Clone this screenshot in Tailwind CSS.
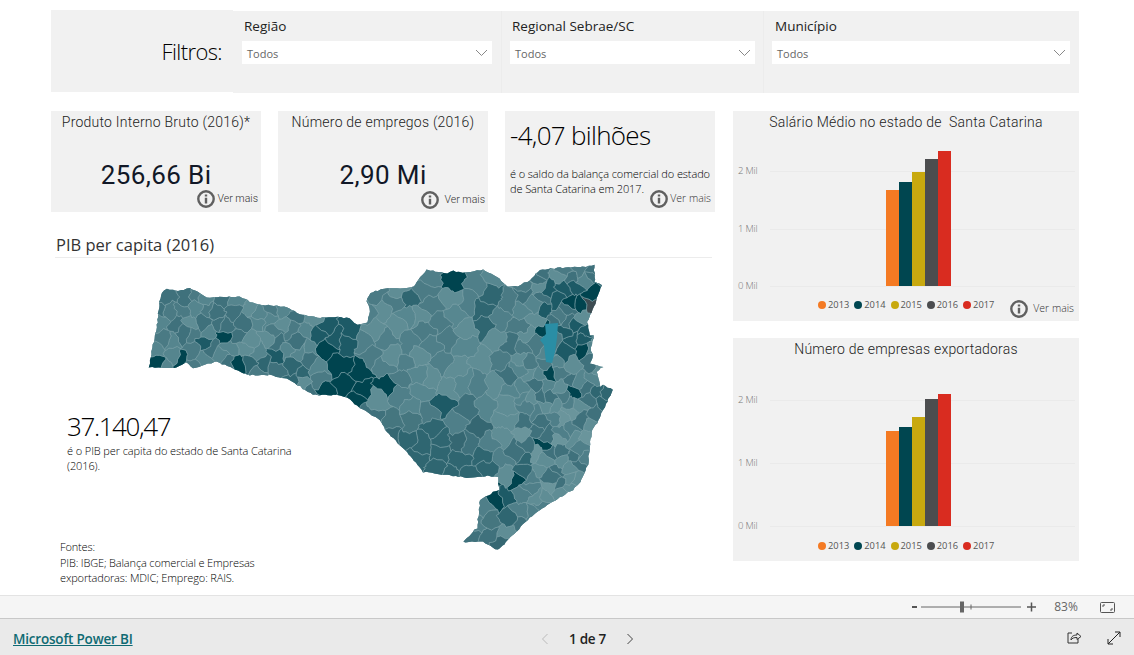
<!DOCTYPE html>
<html lang="pt-BR">
<head>
  <meta charset="UTF-8" />
  <meta name="viewport" content="width=device-width, initial-scale=1.0" />
  <title>Microsoft Power BI</title>
  <script src="https://cdn.jsdelivr.net/npm/@tailwindcss/browser@4"></script>
</head>
<body class="bg-white h-screen overflow-hidden flex flex-col font-['Open_Sans',sans-serif]">

  <!-- Relatorio -->
  <div class="relative flex-1 pl-[51px] pr-[55px] pt-[10px] border-b border-[#e3e3e3]">

    <!-- Filtros -->
    <div class="flex h-[83px]">
      <div class="w-[182px] h-[82px] bg-[#f1f1f1] flex items-center justify-end pr-[11px] text-[22px] font-light tracking-[-0.6px] text-black">Filtros:</div>
      <div class="w-[269px] mt-px bg-[#f1f1f1] border-r border-[#ececec] pl-[9px] pr-[9px] pt-[5px]">
        <p class="pl-[2px] h-[25px] text-[13.5px] leading-[20px] text-[#222]">Região</p>
        <div class="h-[23px] bg-white flex items-center justify-between pl-[5px] pr-[4px] pt-[3px] text-[11px] text-[#666]">
          <span>Todos</span>
          <svg width="13" height="8" viewBox="0 0 13 8" fill="none" stroke="#888" stroke-width="1" class="mb-[2px]"><path d="M1 1l5.500 5.500L12 1" /></svg>
        </div>
      </div>
      <div class="w-[262px] mt-px bg-[#f1f1f1] border-r border-[#ececec] pl-[8px] pr-[8px] pt-[5px]">
        <p class="pl-[2px] h-[25px] text-[13.5px] leading-[20px] text-[#222]">Regional Sebrae/SC</p>
        <div class="h-[23px] bg-white flex items-center justify-between pl-[5px] pr-[4px] pt-[3px] text-[11px] text-[#666]">
          <span>Todos</span>
          <svg width="13" height="8" viewBox="0 0 13 8" fill="none" stroke="#888" stroke-width="1" class="mb-[2px]"><path d="M1 1l5.500 5.500L12 1" /></svg>
        </div>
      </div>
      <div class="w-[315px] mt-px bg-[#f1f1f1] pl-[8px] pr-[9px] pt-[5px]">
        <p class="pl-[3px] h-[25px] text-[13.5px] leading-[20px] text-[#222]">Município</p>
        <div class="h-[23px] bg-white flex items-center justify-between pl-[5px] pr-[4px] pt-[3px] text-[11px] text-[#666]">
          <span>Todos</span>
          <svg width="13" height="8" viewBox="0 0 13 8" fill="none" stroke="#888" stroke-width="1" class="mb-[2px]"><path d="M1 1l5.500 5.500L12 1" /></svg>
        </div>
      </div>
    </div>

    <div class="flex gap-[18px] mt-[18px]">
      <!-- Coluna esquerda -->
      <div class="w-[664px]">
        <div class="flex gap-[17px]">
          <div class="relative w-[210px] h-[101px] bg-[#f1f1f1] text-center font-['Roboto',sans-serif]">
            <p class="pt-[2px] text-[14px] leading-[18px] font-light tracking-[0.23px] text-[#222]">Produto Interno Bruto (2016)*</p>
            <p class="mt-[27px] text-[26px] leading-[34px] tracking-[0.4px] text-[#111827]">256,66 Bi</p>
            <div class="absolute right-[3px] top-[79px] flex items-center gap-[3px]">
              <svg width="18" height="18" viewBox="0 0 18 18"><circle cx="9" cy="9" r="7.700" fill="none" stroke="#606060" stroke-width="2.400" /><path d="M9 4.500v2M9 7.800v5.700" stroke="#606060" stroke-width="2.400" /></svg>
              <span class="text-[10.5px] font-light text-[#333]">Ver mais</span>
            </div>
          </div>
          <div class="relative w-[210px] h-[101px] bg-[#f1f1f1] text-center font-['Roboto',sans-serif]">
            <p class="pt-[2px] text-[14px] leading-[18px] font-light tracking-[0.23px] text-[#222]">Número de empregos (2016)</p>
            <p class="mt-[27px] text-[26px] leading-[34px] tracking-[0.4px] text-[#111827]">2,90 Mi</p>
            <div class="absolute right-[3px] top-[80px] flex items-center gap-[6px]">
              <svg width="18" height="18" viewBox="0 0 18 18"><circle cx="9" cy="9" r="7.700" fill="none" stroke="#606060" stroke-width="2.400" /><path d="M9 4.500v2M9 7.800v5.700" stroke="#606060" stroke-width="2.400" /></svg>
              <span class="text-[10.5px] font-light text-[#333]">Ver mais</span>
            </div>
          </div>
          <div class="relative w-[210px] h-[101px] bg-[#f1f1f1] pl-[5px]">
            <p class="pt-[6px] text-[26px] leading-[36px] font-light tracking-[-0.7px] text-black">-4,07 bilhões</p>
            <p class="mt-[13px] text-[11px] leading-[15px] font-light tracking-[-0.1px] text-black">é o saldo da balança comercial do estado<br />de Santa Catarina em 2017.</p>
            <div class="absolute right-[4px] top-[79px] flex items-center gap-[2px]">
              <svg width="18" height="18" viewBox="0 0 18 18"><circle cx="9" cy="9" r="7.700" fill="none" stroke="#606060" stroke-width="2.400" /><path d="M9 4.500v2M9 7.800v5.700" stroke="#606060" stroke-width="2.400" /></svg>
              <span class="text-[10.5px] font-light text-[#333]">Ver mais</span>
            </div>
          </div>
        </div>

        <!-- PIB per capita -->
        <div class="relative h-[383px]">
          <svg id="mapa" class="absolute left-[-51px] top-[-212px]" width="1134" height="595" viewBox="0 0 1134 595"></svg>
          <div class="relative ml-[4px] mr-[3px] pl-px pt-[22px] h-[46px] border-b border-[#ececec] text-[16.5px] leading-[22px] text-[#333]">PIB per capita (2016)</div>
          <div class="relative pl-[16px] pt-[150px]">
            <p class="text-[26px] leading-[36px] font-light tracking-[-1.4px] text-black">37.140,47</p>
            <p class="w-[240px] mt-[-1px] text-[11px] leading-[15px] font-light tracking-[-0.1px] text-black">é o PIB per capita do estado de Santa Catarina (2016).</p>
          </div>
          <p class="relative pl-[9px] pt-[66px] w-[225px] text-[11px] leading-[15.5px] font-light tracking-[-0.15px] text-black">Fontes:<br />PIB: IBGE; Balança comercial e Empresas exportadoras: MDIC; Emprego: RAIS.</p>
        </div>
      </div>

      <!-- Coluna direita -->
      <div class="w-[346px] flex flex-col gap-[17px]">
        <div class="relative h-[210px] bg-[#f1f1f1]">
          <p class="pt-[2px] text-center font-['Roboto',sans-serif] text-[14px] leading-[18px] font-light tracking-[0.23px] text-[#222]">Salário Médio no estado de&nbsp; Santa Catarina</p>
          <div class="absolute left-[5px] top-[60px] w-[337px] h-[116px] flex flex-col justify-between">
            <div class="flex items-center h-px gap-[8px]"><span class="w-[24px] text-[9.500px] tracking-[-0.2px] font-light text-[#777]">2 Mil</span><span class="flex-1 h-px bg-[#eaeaea]"></span></div>
            <div class="flex items-center h-px gap-[8px]"><span class="w-[24px] text-[9.500px] tracking-[-0.2px] font-light text-[#777]">1 Mil</span><span class="flex-1 h-px bg-[#eaeaea]"></span></div>
            <div class="flex items-center h-px gap-[8px]"><span class="w-[24px] text-[9.500px] tracking-[-0.2px] font-light text-[#777]">0 Mil</span><span class="flex-1 h-px bg-[#eaeaea]"></span></div>
          </div>
          <div class="absolute left-[153px] top-[40px] h-[135px] flex items-end">
            <div class="w-[13px] h-[96px] bg-[#f47a23]"></div>
            <div class="w-[13px] h-[104px] bg-[#004650]"></div>
            <div class="w-[13px] h-[114px] bg-[#c8a90f]"></div>
            <div class="w-[13px] h-[127px] bg-[#4c4d4f]"></div>
            <div class="w-[13px] h-[135px] bg-[#d92c20]"></div>
          </div>
          <div class="absolute left-[85px] top-[187px] flex items-center gap-[5px] text-[9.300px] leading-[14px] text-[#555]">
            <span class="flex items-center gap-[2px]"><i class="size-[8px] rounded-full bg-[#f47a23]"></i>2013</span>
            <span class="flex items-center gap-[2px]"><i class="size-[8px] rounded-full bg-[#004650]"></i>2014</span>
            <span class="flex items-center gap-[2px]"><i class="size-[8px] rounded-full bg-[#c8a90f]"></i>2015</span>
            <span class="flex items-center gap-[2px]"><i class="size-[8px] rounded-full bg-[#4c4d4f]"></i>2016</span>
            <span class="flex items-center gap-[2px]"><i class="size-[8px] rounded-full bg-[#d92c20]"></i>2017</span>
          </div>
          <div class="absolute right-[5px] top-[189px] flex items-center gap-[5px]">
            <svg width="18" height="18" viewBox="0 0 18 18"><circle cx="9" cy="9" r="7.700" fill="none" stroke="#606060" stroke-width="2.400" /><path d="M9 4.500v2M9 7.800v5.700" stroke="#606060" stroke-width="2.400" /></svg>
            <span class="text-[10.5px] font-light text-[#333]">Ver mais</span>
          </div>
        </div>

        <div class="relative h-[223px] bg-[#f1f1f1]">
          <p class="pt-[2px] text-center font-['Roboto',sans-serif] text-[14px] leading-[18px] font-light tracking-[0.2px] text-[#222]">Número de empresas exportadoras</p>
          <div class="absolute left-[5px] top-[62px] w-[337px] h-[127px] flex flex-col justify-between">
            <div class="flex items-center h-px gap-[8px]"><span class="w-[24px] text-[9.500px] tracking-[-0.2px] font-light text-[#777]">2 Mil</span><span class="flex-1 h-px bg-[#eaeaea]"></span></div>
            <div class="flex items-center h-px gap-[8px]"><span class="w-[24px] text-[9.500px] tracking-[-0.2px] font-light text-[#777]">1 Mil</span><span class="flex-1 h-px bg-[#eaeaea]"></span></div>
            <div class="flex items-center h-px gap-[8px]"><span class="w-[24px] text-[9.500px] tracking-[-0.2px] font-light text-[#777]">0 Mil</span><span class="flex-1 h-px bg-[#eaeaea]"></span></div>
          </div>
          <div class="absolute left-[153px] top-[56px] h-[132px] flex items-end">
            <div class="w-[13px] h-[95px] bg-[#f47a23]"></div>
            <div class="w-[13px] h-[99px] bg-[#004650]"></div>
            <div class="w-[13px] h-[109px] bg-[#c8a90f]"></div>
            <div class="w-[13px] h-[127px] bg-[#4c4d4f]"></div>
            <div class="w-[13px] h-[132px] bg-[#d92c20]"></div>
          </div>
          <div class="absolute left-[85px] top-[201px] flex items-center gap-[5px] text-[9.300px] leading-[14px] text-[#555]">
            <span class="flex items-center gap-[2px]"><i class="size-[8px] rounded-full bg-[#f47a23]"></i>2013</span>
            <span class="flex items-center gap-[2px]"><i class="size-[8px] rounded-full bg-[#004650]"></i>2014</span>
            <span class="flex items-center gap-[2px]"><i class="size-[8px] rounded-full bg-[#c8a90f]"></i>2015</span>
            <span class="flex items-center gap-[2px]"><i class="size-[8px] rounded-full bg-[#4c4d4f]"></i>2016</span>
            <span class="flex items-center gap-[2px]"><i class="size-[8px] rounded-full bg-[#d92c20]"></i>2017</span>
          </div>
        </div>
      </div>
    </div>
  </div>

  <!-- Barra de zoom -->
  <div class="h-[23px] shrink-0 bg-[#f5f5f5] border-b border-[#c8c8c8] flex items-center justify-end pr-[19px] text-[#666]">
    <svg width="125" height="14" viewBox="0 0 125 14" class="mr-[9px]">
      <path d="M0 7h5" stroke="#555" stroke-width="2" />
      <path d="M9 7h100M59 4.500v5" stroke="#666" stroke-width="1" />
      <rect x="48" y="1.500" width="4" height="11" fill="#666" />
      <path d="M115 7h9M119.500 2.500v9" stroke="#555" stroke-width="1.500" />
    </svg>
    <span class="w-[40px] text-center text-[12px]">83%</span>
    <svg width="15" height="11" viewBox="0 0 15 11" class="ml-[14px]" fill="none" stroke="#555"><rect x="0.500" y="0.500" width="14" height="10" rx="1" /><path d="M3 5V3h2M12 6v2h-2" /></svg>
  </div>

  <!-- Rodape -->
  <div class="h-[36px] shrink-0 bg-[#eaeaea] flex items-center pl-[13px] pr-[13px] pt-[4px]">
    <a class="w-[370px] text-[13.5px] font-semibold underline tracking-[-0.2px] text-[#0f6a73]">Microsoft Power BI</a>
    <div class="flex items-center ml-[157px]">
      <svg width="10" height="12" viewBox="0 0 10 12" fill="none" stroke="#bbb"><path d="M7.500 1l-5 5 5 5" /></svg>
      <span class="ml-[19px] text-[13.5px] font-semibold tracking-[-0.3px] text-[#222]">1 de 7</span>
      <svg width="10" height="12" viewBox="0 0 10 12" fill="none" stroke="#444" class="ml-[19px]"><path d="M2.500 1l5 5-5 5" /></svg>
    </div>
    <svg width="15" height="13" viewBox="0 0 15 13" fill="none" stroke="#333" class="ml-auto mb-[3px]"><path d="M5 2H1v10h10V8" /><path d="M4 9c0-4 3-5 6-5V2l4 3.500L10 8.500V6.500C7 6.500 5 7 4 9z" /></svg>
    <svg width="14" height="14" viewBox="0 0 14 14" fill="none" stroke="#222" class="ml-[25px] mb-[3px]"><path d="M1 13L13 1M8 1h5v5M1 8v5h5" /></svg>
  </div>

  <!-- Mapa dos municipios: celulas de Voronoi recortadas pelo contorno do estado -->
  <script>
    const contorno = [[149,367],[153,345],[157,325],[159,305],[162,293],[167,289],[178,291],[190,288],[198,292],[207,298],[220,297],[240,297],[253,303],[265,305],[287,307],[303,315],[320,318],[332,317],[350,318],[357,325],[367,323],[370,308],[366,302],[370,293],[387,288],[400,288],[413,287],[420,277],[427,270],[447,273],[453,271],[462,273],[483,270],[497,277],[508,287],[518,286],[530,280],[540,270],[557,268],[583,267],[594,265],[595,282],[602,285],[597,298],[592,312],[587,322],[590,335],[594,335],[591,348],[593,358],[590,363],[603,367],[597,372],[600,387],[603,385],[613,390],[603,410],[597,423],[593,428],[590,442],[588,465],[580,482],[573,490],[550,503],[530,518],[510,538],[498,550],[483,542],[472,542],[463,542],[477,528],[480,500],[493,492],[499,490],[498,477],[488,476],[470,478],[447,475],[423,472],[407,452],[400,445],[387,432],[380,420],[360,408],[347,398],[337,395],[313,395],[290,380],[270,375],[247,375],[233,368],[217,362],[193,368],[187,362],[177,368],[165,368]];

    // gerador com semente, para o desenho sair sempre igual
    let semente = 1234;
    function rnd() {
      semente = (semente * 1664525 + 1013904223) % 4294967296;
      return semente / 4294967296;
    }

    function dentro(x, y) {
      let d = false;
      for (let i = 0, j = contorno.length - 1; i < contorno.length; j = i++) {
        const [xi, yi] = contorno[i], [xj, yj] = contorno[j];
        if ((yi > y) !== (yj > y) && x < (xj - xi) * (y - yi) / (yj - yi) + xi) d = !d;
      }
      return d;
    }

    function distancia(x, y) {
      if (x > 520) return 9;
      if (x < 320) return 10;
      if (y > 430) return 13;
      return 14;
    }

    function corBase(x, y) {
      let cores = ['#4a7a84', '#55858e', '#3f717c', '#5f8d95'];
      if (x > 500 && y > 400) cores = ['#6a959c', '#5f8d95', '#4f7f89', '#3f717c'];
      else if (x > 320 && x < 500 && y < 400) cores = ['#4f7f89', '#578790', '#4b7b85', '#5f8d95'];
      else if (x > 380 && y > 420) cores = ['#3f717c', '#45767f', '#356772', '#4f7f89'];
      return cores[Math.floor(rnd() * cores.length)];
    }

    // municipios mais escuros: x, y, raio x, raio y, cor
    const escuro = '#00444f', medio = '#1d5a66', medio2 = '#2f6671', cinza = '#3d4c52';
    const destaques = [
      [335,337,17,19,medio],[157,362,8,7,escuro],[182,360,6,5,escuro],[203,342,7,6,medio],[222,337,6,5,escuro],
      [238,363,6,7,escuro],[251,364,12,11,medio2],[325,349,8,8,escuro],[340,365,7,7,escuro],[362,388,19,17,escuro],
      [385,385,14,11,escuro],[324,392,8,5,escuro],[276,355,7,5,medio],[303,373,16,10,medio2],[454,282,9,11,escuro],
      [410,299,10,12,medio2],[483,310,16,22,medio2],[443,404,15,11,medio],[422,443,22,18,medio2],[460,462,38,15,medio2],
      [562,288,18,13,medio],[591,291,11,11,escuro],[580,306,10,8,escuro],[546,310,11,12,medio],[545,329,5,9,escuro],
      [573,340,14,17,medio],[582,350,10,8,escuro],[549,371,9,6,escuro],[574,394,7,6,escuro],[603,403,10,18,medio2],
      [543,445,11,7,escuro],[518,480,5,5,escuro],[505,498,15,8,medio],[497,499,6,9,escuro],[527,461,13,11,medio2],
      [508,518,10,6,medio2],[589,305,4,7,cinza]
    ].sort((a, b) => a[2] * a[3] - b[2] * b[3]);

    function corCelula(x, y) {
      const d = destaques.find(d => ((x - d[0]) / d[2]) ** 2 + ((y - d[1]) / d[3]) ** 2 <= 1);
      return d ? d[4] : corBase(x, y);
    }

    const sementes = destaques.map(d => [d[0], d[1]]);
    for (let t = 0; t < 12000; t++) {
      const x = 145 + rnd() * 472, y = 262 + rnd() * 292;
      if (!dentro(x, y)) continue;
      const m = distancia(x, y);
      if (sementes.every(s => Math.hypot(s[0] - x, s[1] - y) > m)) sementes.push([x, y]);
    }

    function cortar(poli, a, b, c) {
      const saida = [];
      for (let i = 0; i < poli.length; i++) {
        const p = poli[i], q = poli[(i + 1) % poli.length];
        const fp = a * p[0] + b * p[1] - c, fq = a * q[0] + b * q[1] - c;
        if (fp <= 0) saida.push(p);
        if (fp * fq < 0) {
          const t = fp / (fp - fq);
          saida.push([p[0] + t * (q[0] - p[0]), p[1] + t * (q[1] - p[1])]);
        }
      }
      return saida;
    }

    // deforma os vertices em funcao da posicao: vizinhos continuam encostados
    function ondular(poli, passo) {
      const saida = [];
      poli.forEach((p, i) => {
        const q = poli[(i + 1) % poli.length];
        const n = Math.max(1, Math.round(Math.hypot(q[0] - p[0], q[1] - p[1]) / passo));
        for (let k = 0; k < n; k++) {
          const x = p[0] + (q[0] - p[0]) * k / n, y = p[1] + (q[1] - p[1]) * k / n;
          saida.push([
            x + 2.2 * Math.sin(y * 0.31 + x * 0.13) + 0.9 * Math.sin(y * 0.93 - x * 0.51),
            y + 2.2 * Math.sin(x * 0.29 - y * 0.17) + 0.9 * Math.sin(x * 0.87 + y * 0.47)
          ]);
        }
      });
      return saida;
    }

    // serrilhado fino so no contorno externo
    function serrilhar(poli, passo, amp) {
      const saida = [];
      poli.forEach((p, i) => {
        const q = poli[(i + 1) % poli.length];
        const n = Math.max(1, Math.round(Math.hypot(q[0] - p[0], q[1] - p[1]) / passo));
        for (let k = 0; k < n; k++) {
          saida.push([p[0] + (q[0] - p[0]) * k / n + (rnd() - 0.5) * amp, p[1] + (q[1] - p[1]) * k / n + (rnd() - 0.5) * amp]);
        }
      });
      return saida;
    }

    const pts = poli => poli.map(p => p[0].toFixed(1) + ',' + p[1].toFixed(1)).join(' ');

    let html = '<defs><clipPath id="estado"><polygon points="' + pts(serrilhar(contorno, 3, 1.3)) + '" /></clipPath></defs><g clip-path="url(#estado)" stroke="#7ea2a9" stroke-width="0.6" stroke-linejoin="round">';
    html += '<rect x="140" y="255" width="480" height="300" fill="#4a7a84" stroke="none" />';
    sementes.forEach(s => {
      let cel = [[130,250],[630,250],[630,560],[130,560]];
      sementes.forEach(o => {
        if (o === s) return;
        const a = o[0] - s[0], b = o[1] - s[1];
        cel = cortar(cel, a, b, (o[0] * o[0] + o[1] * o[1] - s[0] * s[0] - s[1] * s[1]) / 2);
      });
      if (cel.length > 2) html += '<polygon points="' + pts(ondular(cel, 3)) + '" fill="' + corCelula(s[0], s[1]) + '" />';
    });
    // municipio selecionado
    html += '<polygon points="545,324 558,323 557,338 555,352 552,363 546,362 544,345 540,340 546,334" fill="#2a8ea5" stroke="none" /></g>';
    document.getElementById('mapa').innerHTML = html;
  </script>

</body>
</html>
